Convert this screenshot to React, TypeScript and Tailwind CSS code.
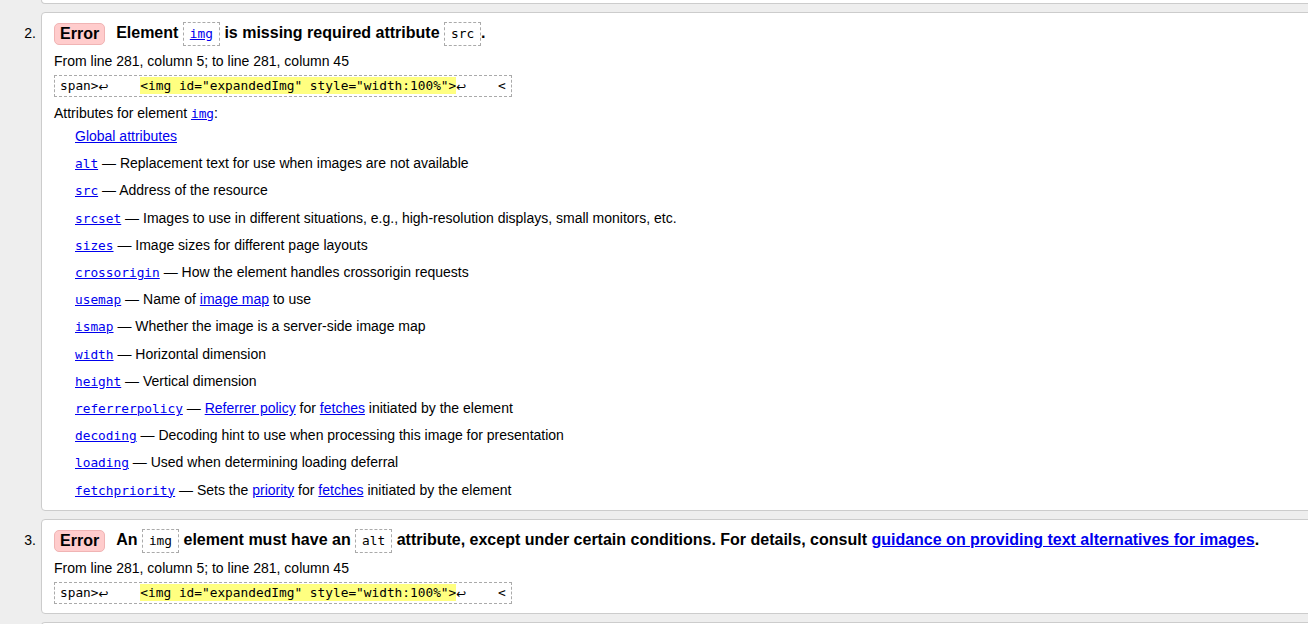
import type { ReactNode } from 'react';

const mono = "font-['DejaVu_Sans_Mono',monospace] text-[12.8px]";
const link = 'text-[#0000ee] underline';

function Code({ children, href }: { children: ReactNode; href?: boolean }) {
  return (
    <span
      className={`${mono} inline-block h-[24px] leading-[22px] px-[6px] border border-dashed border-[#aaa] align-middle font-normal`}
    >
      {href ? <a className={link}>{children}</a> : children}
    </span>
  );
}

function Badge() {
  return (
    <span className="inline-block h-[22px] leading-[20px] px-[5px] rounded-[5px] bg-[#fcc] border border-[#f0b4b4] align-middle mr-[11px]">
      Error
    </span>
  );
}

// line feed marker, a bit wider than a mono cell like in the original
function Lf() {
  return (
    <span className="inline-block w-[11px] font-['DejaVu_Sans',sans-serif] text-[12px] leading-[18px] border-b border-dotted border-black align-[-1px]">
      ↩
    </span>
  );
}

function Extract() {
  return (
    <div
      className={`${mono} w-[458px] h-[22px] leading-[20px] pl-[5px] border border-dashed border-[#aaa] whitespace-pre overflow-hidden text-black`}
    >
      span&gt;<Lf />
      {'    '}
      <span className="bg-[#ffff80] py-[1px]">&lt;img id="expandedImg" style="width:100%"&gt;</span>
      <Lf />
      {'    '}&lt;
    </div>
  );
}

const attrs: [string, ReactNode][] = [
  ['alt', 'Replacement text for use when images are not available'],
  ['src', 'Address of the resource'],
  ['srcset', 'Images to use in different situations, e.g., high-resolution displays, small monitors, etc.'],
  ['sizes', 'Image sizes for different page layouts'],
  ['crossorigin', 'How the element handles crossorigin requests'],
  ['usemap', <>Name of <a className={link}>image map</a> to use</>],
  ['ismap', 'Whether the image is a server-side image map'],
  ['width', 'Horizontal dimension'],
  ['height', 'Vertical dimension'],
  ['referrerpolicy', <><a className={link}>Referrer policy</a> for <a className={link}>fetches</a> initiated by the element</>],
  ['decoding', 'Decoding hint to use when processing this image for presentation'],
  ['loading', 'Used when determining loading deferral'],
  ['fetchpriority', <>Sets the <a className={link}>priority</a> for <a className={link}>fetches</a> initiated by the element</>],
];

function Item({ n, children, last }: { n: number; children: ReactNode; last?: boolean }) {
  return (
    <li className={`flex ${last ? '' : 'mb-[8px]'}`}>
      <div className="w-[41px] shrink-0 text-right pr-[5px] pt-[9px] leading-[24px] text-[14px]">{n}.</div>
      <div className="flex-1 -mr-[20px] bg-white border border-[#ccc] rounded-[4px] pl-[12px]">{children}</div>
    </li>
  );
}

export default function App() {
  return (
    <div className="w-[1308px] h-[624px] overflow-hidden bg-[#eeeeee] font-['Liberation_Sans',Arial,sans-serif] text-black text-[14px]">
      <div className="flex mb-[8px]">
        <div className="w-[41px] shrink-0" />
        <div className="flex-1 -mr-[20px] h-[4px] bg-white border-x border-b border-[#ccc] rounded-b-[4px]" />
      </div>
      <ol>
        <Item n={2}>
          <div className="pt-[8px] pb-[6px]">
            <div className="h-[24px] leading-[24px] whitespace-nowrap font-bold text-[16px]">
              <Badge />
              Element <Code href>img</Code> is missing required attribute <Code>src</Code>.
            </div>
            <p className="mt-[7px] leading-[18px]">From line 281, column 5; to line 281, column 45</p>
            <div className="mt-[5px]">
              <Extract />
            </div>
            <p className="mt-[7px] leading-[18px]">
              Attributes for element <a className={`${link} ${mono}`}>img</a>:
            </p>
            <div className="pl-[21px]">
              <div className="leading-[27.2px]">
                <a className={link}>Global attributes</a>
              </div>
              {attrs.map(([name, desc]) => (
                <div key={name} className="leading-[27.2px] whitespace-nowrap">
                  <a className={`${link} ${mono}`}>{name}</a> — {desc}
                </div>
              ))}
            </div>
          </div>
        </Item>
        <Item n={3} last>
          <div className="pt-[8px] pb-[9px]">
            <div className="h-[24px] leading-[24px] whitespace-nowrap font-bold text-[16px]">
              <Badge />
              An <Code>img</Code> element must have an <Code>alt</Code> attribute, except under certain conditions. For details, consult{' '}
              <a className={link}>guidance on providing text alternatives for images</a>.
            </div>
            <p className="mt-[7px] leading-[18px]">From line 281, column 5; to line 281, column 45</p>
            <div className="mt-[5px]">
              <Extract />
            </div>
          </div>
        </Item>
      </ol>
      <div className="flex mt-[8px]">
        <div className="w-[41px] shrink-0" />
        <div className="flex-1 -mr-[20px] h-[10px] bg-white border-x border-t border-[#ccc] rounded-t-[4px]" />
      </div>
    </div>
  );
}
